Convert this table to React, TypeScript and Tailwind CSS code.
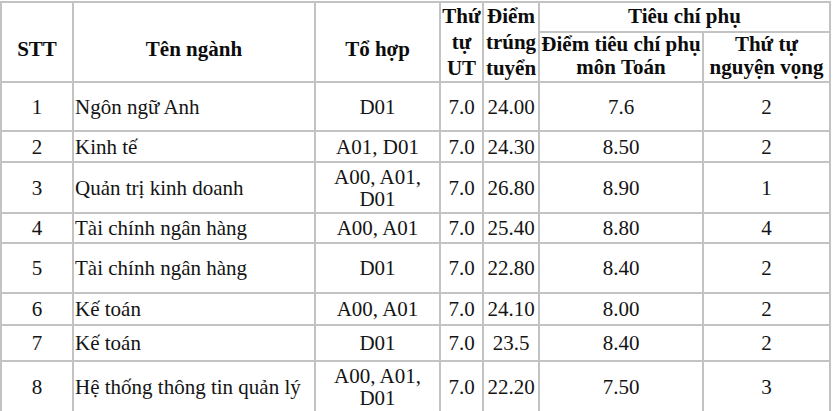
import React from "react";

type Row = {
  stt: string;
  name: string;
  combo: React.ReactNode;
  ut: string;
  score: string;
  math: string;
  wish: string;
  h: string;
};

const rows: Row[] = [
  { stt: "1", name: "Ngôn ngữ Anh", combo: "D01", ut: "7.0", score: "24.00", math: "7.6", wish: "2", h: "h-[49px]" },
  { stt: "2", name: "Kinh tế", combo: "A01, D01", ut: "7.0", score: "24.30", math: "8.50", wish: "2", h: "h-[31px]" },
  {
    stt: "3",
    name: "Quản trị kinh doanh",
    combo: (
      <>
        A00, A01,
        <br />
        D01
      </>
    ),
    ut: "7.0",
    score: "26.80",
    math: "8.90",
    wish: "1",
    h: "h-[51px]",
  },
  { stt: "4", name: "Tài chính ngân hàng", combo: "A00, A01", ut: "7.0", score: "25.40", math: "8.80", wish: "4", h: "h-[30px]" },
  { stt: "5", name: "Tài chính ngân hàng", combo: "D01", ut: "7.0", score: "22.80", math: "8.40", wish: "2", h: "h-[50px]" },
  { stt: "6", name: "Kế toán", combo: "A00, A01", ut: "7.0", score: "24.10", math: "8.00", wish: "2", h: "h-[32px]" },
  { stt: "7", name: "Kế toán", combo: "D01", ut: "7.0", score: "23.5", math: "8.40", wish: "2", h: "h-[36px]" },
  {
    stt: "8",
    name: "Hệ thống thông tin quản lý",
    combo: (
      <>
        A00, A01,
        <br />
        D01
      </>
    ),
    ut: "7.0",
    score: "22.20",
    math: "7.50",
    wish: "3",
    h: "h-[51px]",
  },
];

const cell = "border-2 border-[#c3c3c3] p-0 align-middle font-['Liberation_Serif'] text-[21px]";

export default function App() {
  return (
    <div className="bg-white w-[833px] h-[411px] overflow-hidden pt-[1px] font-['Liberation_Serif']">
      <table className="table-fixed border-collapse border-2 border-[#c3c3c3] w-[831px] text-[#141414] text-[21px] leading-[22px] font-['Liberation_Serif']">
        <colgroup>
          <col className="w-[72px]" />
          <col className="w-[242px]" />
          <col className="w-[125px]" />
          <col className="w-[43px]" />
          <col className="w-[56px]" />
          <col className="w-[164px]" />
          <col className="w-[127px]" />
        </colgroup>
        <thead className="font-bold text-[#0c0c0c]">
          <tr className="h-[30px]">
            <th rowSpan={2} className={`${cell} font-bold text-center leading-[26px] pt-[14px]`}>
              STT
            </th>
            <th rowSpan={2} className={`${cell} font-bold text-center leading-[26px] pt-[14px]`}>
              Tên ngành
            </th>
            <th rowSpan={2} className={`${cell} font-bold text-center leading-[26px] pt-[14px]`}>
              Tổ hợp
            </th>
            <th rowSpan={2} className={`${cell} font-bold text-center leading-[26px] whitespace-nowrap`}>
              Thứ
              <br />
              tự
              <br />
              UT
            </th>
            <th rowSpan={2} className={`${cell} font-bold text-center leading-[26px] whitespace-nowrap`}>
              Điểm
              <br />
              trúng
              <br />
              tuyển
            </th>
            <th colSpan={2} className={`${cell} font-bold text-center leading-[24px] pb-[2px] whitespace-nowrap`}>
              Tiêu chí phụ
            </th>
          </tr>
          <tr className="h-[50px]">
            <th className={`${cell} font-bold text-center leading-[23px] pb-[2px] whitespace-nowrap`}>
              Điểm tiêu chí phụ
              <br />
              môn Toán
            </th>
            <th className={`${cell} font-bold text-center leading-[23px] pb-[2px] whitespace-nowrap`}>
              Thứ tự
              <br />
              nguyện vọng
            </th>
          </tr>
        </thead>
        <tbody>
          {rows.map((r) => (
            <tr key={r.stt} className={r.h}>
              <td className={`${cell} text-center`}>{r.stt}</td>
              <td className={`${cell} text-left pl-[1px] whitespace-nowrap`}>{r.name}</td>
              <td className={`${cell} text-center whitespace-nowrap leading-[22px]`}>{r.combo}</td>
              <td className={`${cell} text-center`}>{r.ut}</td>
              <td className={`${cell} text-center`}>{r.score}</td>
              <td className={`${cell} text-center`}>{r.math}</td>
              <td className={`${cell} text-center`}>{r.wish}</td>
            </tr>
          ))}
        </tbody>
      </table>
    </div>
  );
}
